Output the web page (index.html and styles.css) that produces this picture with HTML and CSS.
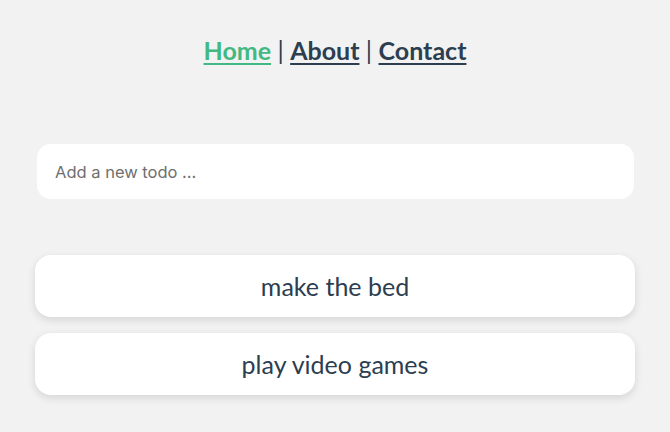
FILE: index.html
```html
<!DOCTYPE html>
<html>
<head>
<meta charset="utf-8">
<link rel="stylesheet" href="styles.css">
</head>
<body>
<div class="app">
  <nav class="nav">
    <a class="link active" href="#">Home</a> | <a class="link" href="#">About</a> | <a class="link" href="#">Contact</a>
  </nav>
  <main class="content">
    <div class="new-todo">
      <input class="todo-input" type="text" placeholder="Add a new todo ...">
    </div>
    <ul class="todos">
      <li class="todo">make the bed</li>
      <li class="todo">play video games</li>
    </ul>
  </main>
</div>
</body>
</html>
```
FILE: styles.css
```css
html, body {
  margin: 0;
  padding: 0;
  background: #f2f2f2;
}
.app {
  font-family: Lato, "Noto Sans", sans-serif;
  color: #2c3e50;
  padding-top: 34px;
  padding-bottom: 20px;
}
.nav {
  text-align: center;
  font-size: 25px;
  font-weight: 400;
  line-height: 32px;
  color: #2c3e50;
}
.link {
  font-weight: 700;
  color: #2c3e50;
  text-decoration: underline;
  text-underline-offset: 3px;
  text-decoration-thickness: 2px;
}
.link.active {
  color: #42b983;
}
.content {
  width: 600px;
  margin: 0 auto;
  padding-top: 78px;
}
.new-todo {
  padding: 0 2px 0 2px;
}
.todo-input {
  display: block;
  box-sizing: border-box;
  width: 597px;
  height: 55px;
  border: none;
  border-radius: 14px;
  background: #fff;
  padding: 0 18px;
  font-family: Inter, "Noto Sans", sans-serif;
  font-size: 16.5px;
  color: #2c3e50;
  outline: none;
}
.todo-input::placeholder {
  color: #6f6f6f;
}
.todos {
  list-style: none;
  margin: 56px 0 0 0;
  padding: 0;
  display: flex;
  flex-direction: column;
  gap: 16px;
}
.todo {
  height: 62px;
  box-sizing: border-box;
  display: flex;
  align-items: center;
  justify-content: center;
  background: #fff;
  border-radius: 16px;
  box-shadow: 0 3px 8px rgba(0, 0, 0, 0.12);
  font-size: 25px;
  color: #2c3e50;
  padding-bottom: 1px;
}
```
